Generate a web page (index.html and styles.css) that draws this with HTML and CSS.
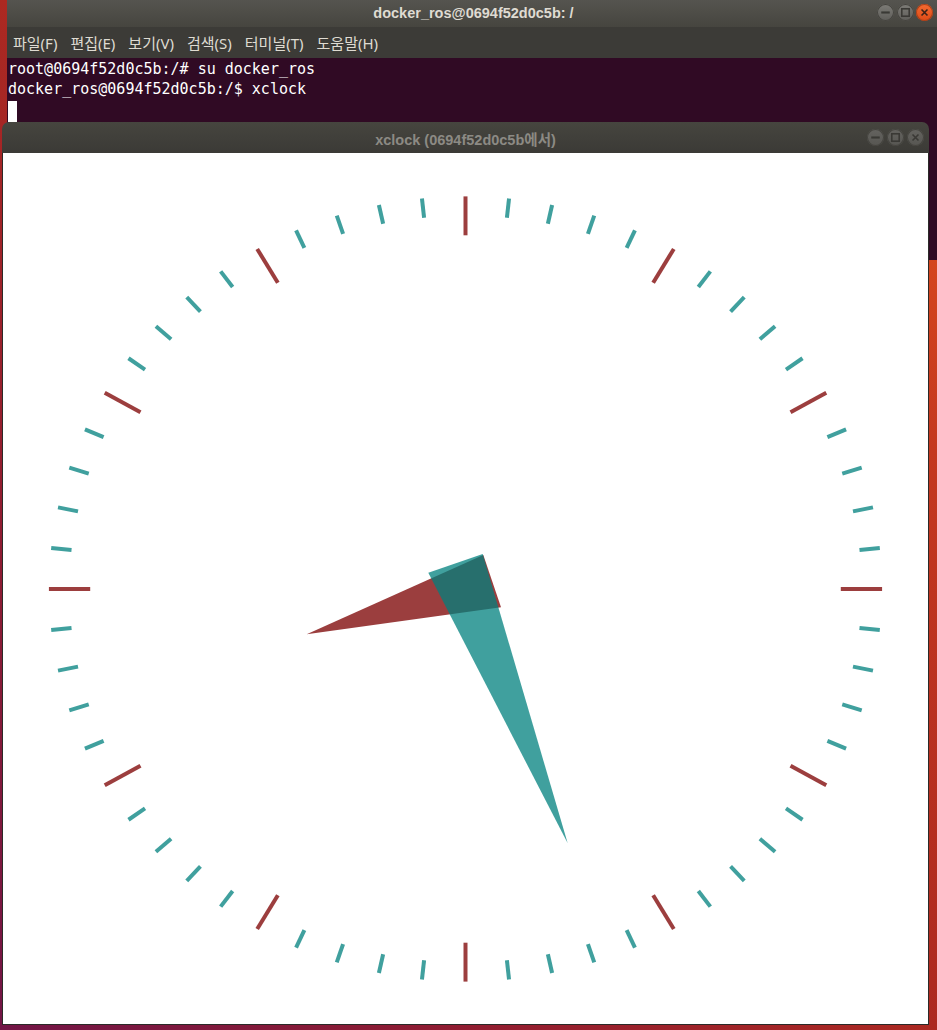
FILE: index.html
```html
<!DOCTYPE html>
<html lang="ko">
<head>
<meta charset="utf-8">
<title>xclock</title>
<link rel="stylesheet" href="styles.css">
</head>
<body>
<div class="desktop">
  <div class="window terminal">
    <div class="titlebar term-title">
      <div></div>
      <div class="title">docker_ros@0694f52d0c5b: /</div>
      <div class="buttons">
        <span class="btn"><svg width="17" height="17" viewBox="0 0 16 16"><line x1="4" y1="8" x2="12" y2="8" class="ico"/></svg></span>
        <span class="btn"><svg width="17" height="17" viewBox="0 0 16 16"><rect x="4.5" y="4.5" width="7" height="7" class="ico thin"/></svg></span>
        <span class="btn close"><svg width="17" height="17" viewBox="0 0 16 16"><path d="M5.2 5.2 L10.8 10.8 M10.8 5.2 L5.2 10.8" class="ico thin"/></svg></span>
      </div>
    </div>
    <div class="menubar">
      <span>파일(F)</span><span>편집(E)</span><span>보기(V)</span><span>검색(S)</span><span>터미널(T)</span><span>도움말(H)</span>
    </div>
    <div class="term-body">
      <div class="line">root@0694f52d0c5b:/# su docker_ros</div>
      <div class="line">docker_ros@0694f52d0c5b:/$ xclock</div>
      <div class="cursor"></div>
    </div>
  </div>

  <div class="window xclock">
    <div class="titlebar clock-title">
      <div></div>
      <div class="title">xclock (0694f52d0c5b에서)</div>
      <div class="buttons">
        <span class="btn"><svg width="17" height="17" viewBox="0 0 16 16"><line x1="4" y1="8" x2="12" y2="8" class="ico"/></svg></span>
        <span class="btn"><svg width="17" height="17" viewBox="0 0 16 16"><rect x="4.5" y="4.5" width="7" height="7" class="ico thin"/></svg></span>
        <span class="btn"><svg width="17" height="17" viewBox="0 0 16 16"><path d="M5.2 5.2 L10.8 10.8 M10.8 5.2 L5.2 10.8" class="ico thin"/></svg></span>
      </div>
    </div>
    <div class="clock-face">
      <svg class="clock" width="925" height="871" viewBox="0 0 925 871">
        <defs>
          <g id="five">
            <line class="major" x1="0" y1="-0.999" x2="0" y2="-0.9"/>
            <line class="minor" x1="0" y1="-0.999" x2="0" y2="-0.95" transform="rotate(6)"/>
            <line class="minor" x1="0" y1="-0.999" x2="0" y2="-0.95" transform="rotate(12)"/>
            <line class="minor" x1="0" y1="-0.999" x2="0" y2="-0.95" transform="rotate(18)"/>
            <line class="minor" x1="0" y1="-0.999" x2="0" y2="-0.95" transform="rotate(24)"/>
          </g>
        </defs>
        <g transform="translate(462.5 436) scale(417 393)">
          <use href="#five" transform="rotate(0)"/>
          <use href="#five" transform="rotate(30)"/>
          <use href="#five" transform="rotate(60)"/>
          <use href="#five" transform="rotate(90)"/>
          <use href="#five" transform="rotate(120)"/>
          <use href="#five" transform="rotate(150)"/>
          <use href="#five" transform="rotate(180)"/>
          <use href="#five" transform="rotate(210)"/>
          <use href="#five" transform="rotate(240)"/>
          <use href="#five" transform="rotate(270)"/>
          <use href="#five" transform="rotate(300)"/>
          <use href="#five" transform="rotate(330)"/>
        </g>
        <polygon class="hour" points="303.7,481.3 480.3,402 498,454.3"/>
        <polygon class="minute" points="564.7,690.3 425.3,419.7 479.7,401"/>
      </svg>
    </div>
  </div>
</div>
</body>
</html>
```

FILE: styles.css
```css
html, body {
  margin: 0;
  padding: 0;
}

body {
  width: 937px;
  height: 1030px;
  overflow: hidden;
  font-family: "Liberation Sans", "Noto Sans CJK KR", sans-serif;
}

.desktop {
  position: relative;
  width: 937px;
  height: 1030px;
  overflow: hidden;
  background: linear-gradient(to bottom left, #ea581c 0%, #c4381f 22%, #ae2a20 48%, #921d30 74%, #721546 100%);
}

.window {
  position: absolute;
  display: flex;
  flex-direction: column;
}

.terminal {
  left: 7px;
  top: 0;
  width: 930px;
  height: 260px;
}

.titlebar {
  display: grid;
  grid-template-columns: 1fr auto 1fr;
  align-items: center;
}

.term-title {
  height: 27px;
  background: linear-gradient(#55544f, #46453f);
}

.title {
  font-weight: bold;
  font-size: 14.5px;
  color: #dfdbd2;
  white-space: nowrap;
}

.term-title .title {
  padding-left: 3px;
  padding-bottom: 1px;
}

.buttons {
  display: flex;
  justify-content: flex-end;
  align-items: center;
}

.term-title .buttons {
  gap: 2.5px;
  padding-right: 4px;
  padding-bottom: 2px;
}

.btn {
  width: 17px;
  height: 17px;
  border-radius: 50%;
  box-sizing: border-box;
  background: linear-gradient(#7d7c77, #5e5d59);
  box-shadow: inset 0 0 0 1px #45443f;
  display: flex;
}

.btn .ico {
  stroke: #3a3935;
  stroke-width: 2;
  fill: none;
}

.btn .ico.thin {
  stroke-width: 1.5;
}

.btn.close {
  background: linear-gradient(#f26b32, #de4a16);
  box-shadow: inset 0 0 0 1px #a8401a;
}

.btn.close .ico {
  stroke: #3b2218;
}

.menubar {
  height: 31px;
  background: #3c3b37;
  display: flex;
  align-items: center;
  gap: 13px;
  padding-left: 6px;
  font-family: "Noto Sans", "Noto Sans CJK KR", sans-serif;
  font-size: 15px;
  color: #dfdbd2;
}

.term-body {
  flex: 1;
  background: #300a24;
  padding-top: 1px;
  padding-left: 1px;
  font-family: "DejaVu Sans Mono", monospace;
  font-size: 15px;
  line-height: 20px;
  color: #ffffff;
}

.line {
  white-space: pre;
}

.cursor {
  width: 9px;
  height: 21px;
  margin-top: 2px;
  background: #ffffff;
}

.xclock {
  left: 2px;
  top: 122px;
  width: 927px;
  height: 903px;
}

.clock-title {
  height: 31px;
  border-radius: 7px 7px 0 0;
  background: linear-gradient(#46453f, #3b3a36);
}

.clock-title .title {
  color: #8c8a84;
  padding-top: 1px;
}

.clock-title .buttons {
  gap: 3px;
  padding-right: 5.5px;
}

.clock-title .btn {
  background: linear-gradient(#64635f, #575652);
  box-shadow: inset 0 0 0 1px #45443f;
}

.clock-title .btn .ico {
  stroke: #3a3935;
}

.clock-face {
  flex: 1;
  background: #ffffff;
  border: 1px solid #2b2a28;
  border-top: none;
  display: flex;
}

.clock {
  display: block;
}

.major {
  stroke: #9c3e3e;
  stroke-width: 4;
  vector-effect: non-scaling-stroke;
}

.minor {
  stroke: #40a09e;
  stroke-width: 4;
  vector-effect: non-scaling-stroke;
}

.hour {
  fill: #9b3e3e;
}

.minute {
  fill: rgb(0, 128, 126);
  fill-opacity: 0.75;
}
```
